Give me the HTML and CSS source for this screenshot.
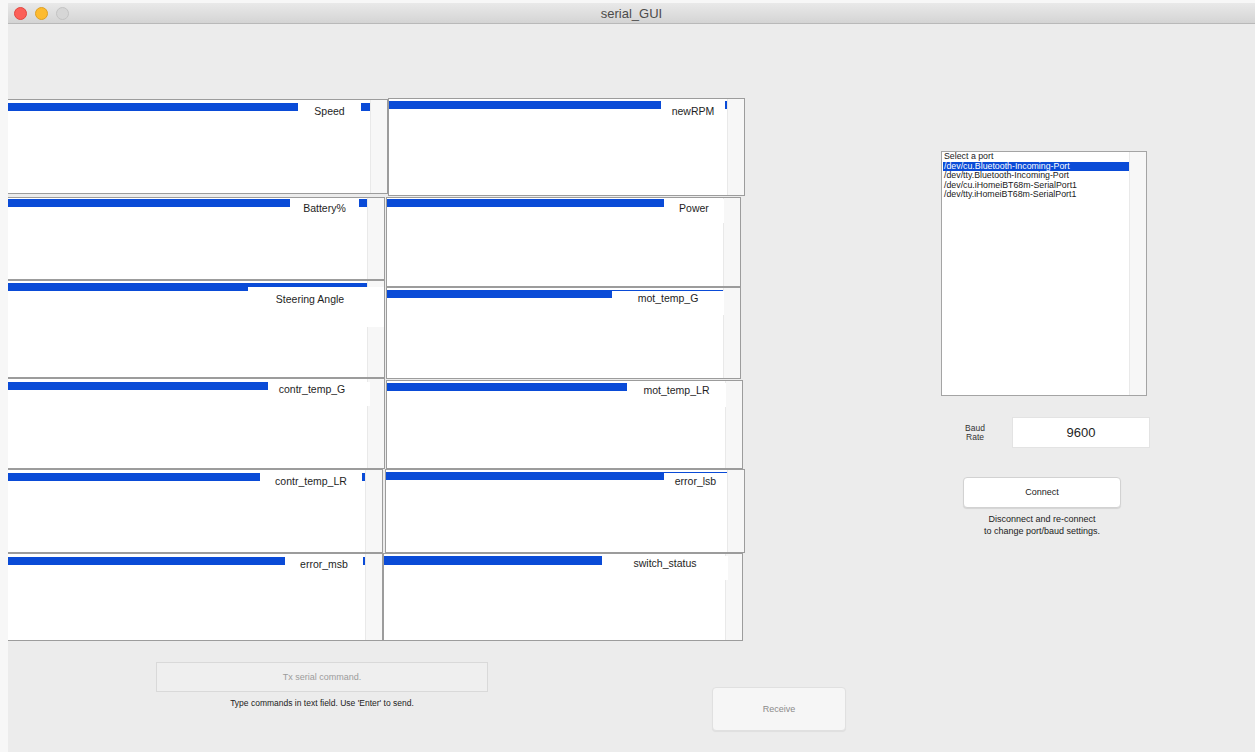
FILE: index.html
```html
<!DOCTYPE html>
<html>
<head>
<meta charset="utf-8">
<title>serial_GUI</title>
<link rel="stylesheet" href="styles.css">
</head>
<body>
<div class="window">
  <div class="titlebar">
    <div class="lights">
      <span class="light light-close"></span>
      <span class="light light-min"></span>
      <span class="light light-zoom"></span>
    </div>
    <div class="title">serial_GUI</div>
  </div>

  <div class="content">
    <div class="main">
      <div class="panels">
        <div class="col col-left">
          <div class="lb l1"><div class="list"><div class="sel"></div></div><div class="scroll"></div><span class="tag">Speed</span></div>
          <div class="lb l2"><div class="list"><div class="sel"></div></div><div class="scroll"></div><span class="tag">Battery%</span></div>
          <div class="lb l3"><div class="list"><div class="sel"></div></div><div class="scroll"></div><span class="tag">Steering Angle</span></div>
          <div class="lb l4"><div class="list"><div class="sel"></div></div><div class="scroll"></div><span class="tag">contr_temp_G</span></div>
          <div class="lb l5"><div class="list"><div class="sel"></div></div><div class="scroll"></div><span class="tag">contr_temp_LR</span></div>
          <div class="lb l6"><div class="list"><div class="sel"></div></div><div class="scroll"></div><span class="tag">error_msb</span></div>
        </div>
        <div class="col col-right">
          <div class="lb r1"><div class="list"><div class="sel"></div></div><div class="scroll"></div><span class="tag">newRPM</span></div>
          <div class="lb r2"><div class="list"><div class="sel"></div></div><div class="scroll"></div><span class="tag">Power</span></div>
          <div class="lb r3"><div class="list"><div class="sel"></div></div><div class="scroll"></div><span class="tag">mot_temp_G</span></div>
          <div class="lb r4"><div class="list"><div class="sel"></div></div><div class="scroll"></div><span class="tag">mot_temp_LR</span></div>
          <div class="lb r5"><div class="list"><div class="sel"></div></div><div class="scroll"></div><span class="tag">error_lsb</span></div>
          <div class="lb r6"><div class="list"><div class="sel"></div></div><div class="scroll"></div><span class="tag">switch_status</span></div>
        </div>
      </div>

      <div class="side">
        <div class="ports">
          <div class="port-items">
            <div class="opt">Select a port</div>
            <div class="opt opt-on">/dev/cu.Bluetooth-Incoming-Port</div>
            <div class="opt">/dev/tty.Bluetooth-Incoming-Port</div>
            <div class="opt">/dev/cu.iHomeiBT68m-SerialPort1</div>
            <div class="opt">/dev/tty.iHomeiBT68m-SerialPort1</div>
          </div>
          <div class="scroll"></div>
        </div>
        <div class="baud">
          <div class="baud-label">Baud<br>Rate</div>
          <div class="baud-input">9600</div>
        </div>
        <div class="btn-connect">Connect</div>
        <div class="note">Disconnect and re-connect<br>to change port/baud settings.</div>
      </div>
    </div>

    <div class="bottom">
      <div class="tx">
        <div class="tx-field">Tx serial command.</div>
        <div class="tx-hint">Type commands in text field. Use 'Enter' to send.</div>
      </div>
      <div class="btn-receive">Receive</div>
    </div>
  </div>
</div>
</body>
</html>
```

FILE: styles.css
```css
html, body {
  margin: 0;
  height: 100%;
}

body {
  padding: 3px 0 0 8px;
  box-sizing: border-box;
  background: #f7f7f7;
  overflow: hidden;
  font-family: "Liberation Sans", Arial, sans-serif;
  color: #222;
}

.window {
  width: 1247px;
  height: 749px;
  background: #ececec;
  display: flex;
  flex-direction: column;
}

/* ---------- title bar ---------- */
.titlebar {
  height: 20px;
  border-bottom: 1px solid #b9b9b9;
  background: linear-gradient(#e9e9e9, #d4d4d4);
  display: flex;
  align-items: center;
  position: relative;
}

.lights {
  display: flex;
  gap: 8px;
  padding-left: 6px;
}

.light {
  width: 13px;
  height: 13px;
  border-radius: 50%;
  box-sizing: border-box;
}

.light-close { background: #fc5f58; border: 1px solid #e2463f; }
.light-min { background: #fdbb2f; border: 1px solid #dea024; }
.light-zoom { background: #d6d6d6; border: 1px solid #c3c3c3; }

.title {
  position: absolute;
  left: 0;
  right: 0;
  top: 3px;
  text-align: center;
  font-size: 13px;
  color: #4b4b4b;
}

/* ---------- main area ---------- */
.content {
  flex: 1;
  display: flex;
  flex-direction: column;
}

.main {
  display: flex;
  align-items: flex-start;
  padding-top: 74px;
}

.panels {
  display: flex;
  align-items: flex-start;
}

.col {
  display: flex;
  flex-direction: column;
}

.col-left {
  width: 380px;
  padding-top: 1px;
}

.col-right {
  width: 362px;
  margin-left: -5px;
}

/* listbox with selected row and a label laid over it */
.lb {
  position: relative;
  display: flex;
  box-sizing: border-box;
  background: #fff;
  border: 1px solid #9c9c9c;
}

.col-left .lb {
  border-left: none;
}

.list {
  flex: 1;
}

.sel {
  height: 8px;
  background: #0a4bd7;
}

.scroll {
  width: 17px;
  box-sizing: border-box;
  background: #f7f7f7;
  border-left: 1px solid #e9e9e9;
}

.tag {
  position: absolute;
  background: #fff;
  font-size: 10.5px;
  line-height: 13px;
  text-align: center;
  color: #1e1e1e;
  box-sizing: border-box;
  height: 24px;
}

/* left column */
.l1 { width: 380px; height: 95px; margin-bottom: 3px; }
.l1 .list { padding-top: 3px; }
.l1 .tag { left: 290px; top: 3px; width: 63px; padding-top: 2px; }

.l2 { width: 377px; height: 83px; }
.l2 .list { padding-top: 1px; }
.l2 .tag { left: 282px; top: 1px; width: 69px; padding-top: 3px; }

.l3 { width: 377px; height: 98px; }
.l3 .list { padding-top: 2px; }
.l3 .tag { left: 240px; top: 6px; width: 136px; height: 40px; padding-top: 6px; padding-right: 12px; }

.l4 { width: 377px; height: 91px; }
.l4 .list { padding-top: 3px; }
.l4 .tag { left: 260px; top: 3px; width: 102px; padding-top: 1px; padding-right: 14px; }

.l5 { width: 375px; height: 84px; }
.l5 .list { padding-top: 3px; }
.l5 .tag { left: 252px; top: 3px; width: 102px; padding-top: 2px; }

.l6 { width: 375px; height: 88px; }
.l6 .list { padding-top: 3px; }
.l6 .tag { left: 277px; top: 3px; width: 78px; padding-top: 1px; }

/* right column */
.r1 { width: 357px; height: 98px; margin-left: 5px; margin-bottom: 1px; }
.r1 .list { padding-top: 2px; }
.r1 .tag { left: 272px; top: 2px; width: 64px; padding-top: 4px; }

.r2 { width: 355px; height: 90px; margin-left: 3px; }
.r2 .list { padding-top: 1px; }
.r2 .tag { left: 277px; top: 1px; width: 60px; padding-top: 3px; }

.r3 { width: 355px; height: 92px; margin-left: 3px; }
.r3 .list { padding-top: 2px; }
.r3 .tag { left: 225px; top: 3px; width: 112px; padding-top: 1px; }

.r4 { width: 357px; height: 89px; margin-left: 3px; margin-top: 1px; }
.r4 .list { padding-top: 2px; }
.r4 .tag { left: 240px; top: 2px; width: 99px; padding-top: 1px; }

.r5 { width: 360px; height: 84px; margin-left: 2px; }
.r5 .list { padding-top: 2px; }
.r5 .tag { left: 278px; top: 3px; width: 63px; padding-top: 2px; }

.r6 { width: 360px; height: 88px; }
.r6 .list { padding-top: 2px; }
.r6 .sel { height: 9px; }
.r6 .tag { left: 218px; top: 2px; width: 126px; padding-top: 1px; }

/* ---------- port selection ---------- */
.side {
  margin-left: 196px;
  margin-top: 53px;
  display: flex;
  flex-direction: column;
}

.ports {
  width: 206px;
  height: 245px;
  box-sizing: border-box;
  border: 1px solid #a4a4a4;
  background: #fff;
  display: flex;
}

.port-items {
  flex: 1;
  padding-left: 1px;
}

.opt {
  font-size: 8.8px;
  line-height: 9.5px;
  padding-left: 1px;
  color: #1a1a1a;
  white-space: nowrap;
}

.opt-on {
  background: #0a4bd7;
  color: #fff;
}

.baud {
  display: flex;
  align-items: center;
  margin-top: 21px;
}

.baud-label {
  width: 30px;
  margin-left: 19px;
  font-size: 8.5px;
  line-height: 9px;
  text-align: center;
  color: #333;
}

.baud-input {
  width: 138px;
  height: 31px;
  margin-left: 22px;
  box-sizing: border-box;
  background: #fff;
  border: 1px solid #e3e3e3;
  font-size: 13px;
  line-height: 29px;
  text-align: center;
  color: #1e1e1e;
}

.btn-connect {
  width: 158px;
  height: 31px;
  margin-top: 29px;
  margin-left: 22px;
  box-sizing: border-box;
  background: #fff;
  border: 1px solid #d2d2d2;
  border-radius: 4px;
  box-shadow: 0 1px 1px rgba(0, 0, 0, 0.1);
  font-size: 9px;
  line-height: 29px;
  text-align: center;
  color: #222;
}

.note {
  width: 158px;
  margin-left: 22px;
  margin-top: 5px;
  font-size: 9px;
  line-height: 12px;
  text-align: center;
  color: #222;
}

/* ---------- bottom controls ---------- */
.bottom {
  display: flex;
  align-items: flex-start;
  padding-left: 148px;
  margin-top: 21px;
}

.tx {
  width: 332px;
}

.tx-field {
  height: 30px;
  box-sizing: border-box;
  background: #efefef;
  border: 1px solid #d9d9d9;
  font-size: 9px;
  line-height: 28px;
  text-align: center;
  color: #9c9c9c;
}

.tx-hint {
  margin-top: 5px;
  font-size: 8.5px;
  line-height: 12px;
  text-align: center;
  color: #222;
}

.btn-receive {
  width: 134px;
  height: 44px;
  margin-left: 224px;
  margin-top: 25px;
  box-sizing: border-box;
  background: #f6f6f6;
  border: 1px solid #e0e0e0;
  border-radius: 4px;
  box-shadow: 0 1px 1px rgba(0, 0, 0, 0.06);
  font-size: 9px;
  line-height: 42px;
  text-align: center;
  color: #8b8b8b;
}
```
